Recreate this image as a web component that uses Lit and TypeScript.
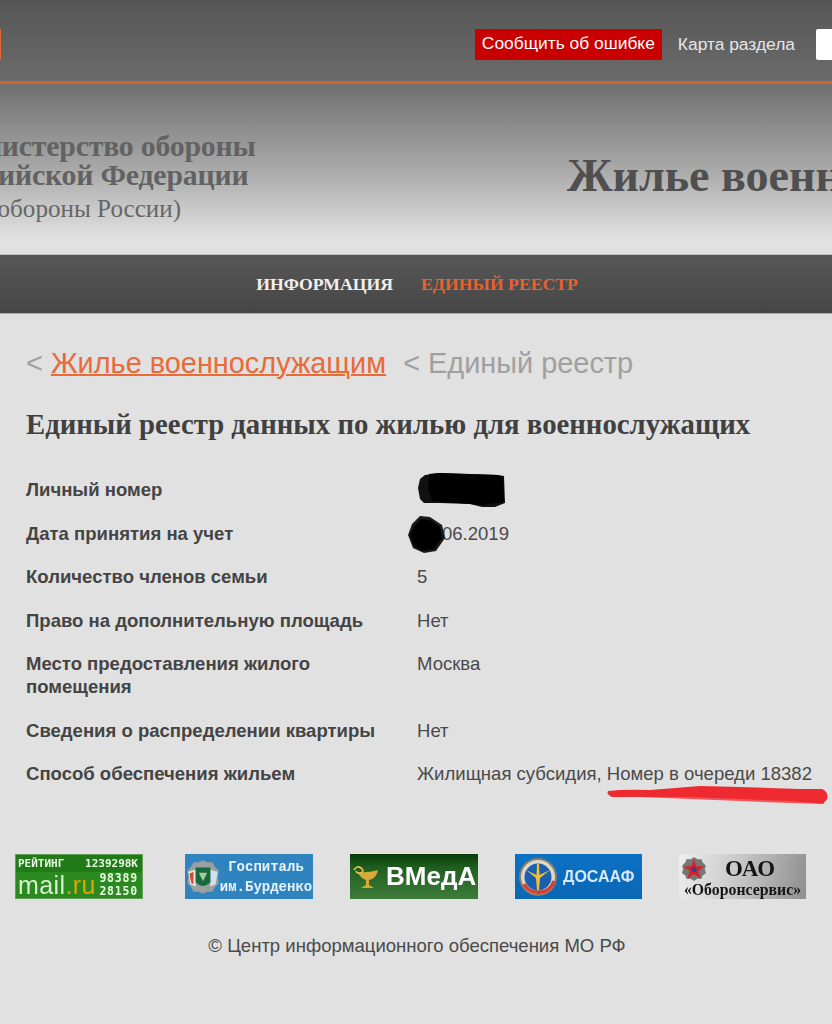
import { LitElement, html, css, svg } from "lit";
import { customElement } from "lit/decorators.js";

@customElement("app-root")
export class AppRoot extends LitElement {
  static styles = css`
    :host { display: block; position: relative; width: 832px; height: 1024px; overflow: hidden; background: #e1e1e1; font-family: "Liberation Sans", Arial, sans-serif; color: #3f3f3f; }
    .top { height: 73px; padding-top: 8px; background: linear-gradient(#565656, #6b6b6b); border-bottom: 3px solid #d2622e; display: flex; align-items: center; overflow: hidden; }
    .tick { width: 1px; height: 31px; background: #e0692e; flex: none; margin-top: -1px; }
    .top-right { margin-left: auto; display: flex; align-items: center; margin-right: -20px; }
    .report { background: #c90000; color: #fff; font-size: 17.4px; height: 31px; line-height: 29px; padding: 0 7px; white-space: nowrap; }
    .map { color: #e6e6e6; font-size: 17.4px; margin-left: 16px; white-space: nowrap; margin-top: -1px; }
    .search { width: 36px; height: 31px; background: #fff; margin-left: 21px; border-radius: 2px; }
    .banner { height: 170px; background: linear-gradient(#6f6f6f 0%, #a9a9a9 50%, #e2e2e2 92%); display: flex; overflow: hidden; font-family: "Liberation Serif", serif; border-bottom: 1px solid #bdbdbd; }
    .org { margin-left: -60px; padding-top: 47px; width: 318px; flex: none; white-space: nowrap; color: #626262; }
    .org b { display: block; font-size: 29.8px; line-height: 29px; letter-spacing: -0.2px; }
    .org span { display: block; font-size: 25.1px; line-height: 28px; margin-top: 6px; color: #666; }
    .site { margin-left: 309px; padding-top: 67px; font-size: 46px; font-weight: bold; white-space: nowrap; color: #4f4f4f; line-height: 50px; }
    .nav { height: 58px; background: linear-gradient(#575757, #464646); display: flex; justify-content: center; align-items: center; gap: 28px; font-family: "Liberation Serif", serif; font-weight: bold; font-size: 17.7px; border-bottom: 1px solid #aaa; padding-left: 2px; }
    .nav .a { color: #f0f0f0; }
    .nav .b { color: #e8622f; }
    .crumbs { margin: 33px 0 0 26px; font-size: 28.9px; line-height: 32px; color: #a0a0a0; white-space: nowrap; }
    .crumbs a { color: #ea6a38; text-decoration: underline; text-decoration-thickness: 2px; }
    .crumbs .sep2 { margin-left: 9px; }
    h1 { margin: 29px 0 0 26px; font: bold 28.75px/32px "Liberation Serif", serif; color: #404040; white-space: nowrap; }
    .rows { margin: 38px 0 0 26px; display: grid; grid-template-columns: 391px 1fr; row-gap: 20.5px; font-size: 18.55px; line-height: 23px; }
    .rows .k { font-weight: bold; color: #444; max-width: 360px; }
    .rows .v { color: #4a4a4a; white-space: nowrap; }
    .rows .v.masked { padding-left: 25px; }
    .logos { margin: 69px 0 0 15px; display: flex; gap: 37px; }
    .logo { width: 128px; height: 45px; flex: none; box-sizing: border-box; position: relative; overflow: hidden; display: flex; align-items: center; white-space: nowrap; filter: blur(0.4px); }
    .logo svg { flex: none; }
    .logo.first { margin-right: 5px; }
    .mail { background: #2a8a20; border: 1px solid #5f9f58; flex-direction: column; align-items: stretch; color: #eafbe6; font: bold 11px/12px "DejaVu Sans Mono", monospace; }
    .mail .r1 { background: #1f7a17; height: 17px; display: flex; justify-content: space-between; align-items: center; padding: 0 4px 0 2px; }
    .mail .r2 { flex: 1; display: flex; justify-content: space-between; align-items: center; padding: 0 4px 0 2px; }
    .mail .brand { font: 25px/24px "Liberation Sans", sans-serif; color: #d8efd0; letter-spacing: 0.4px; }
    .mail .brand i { color: #e0a400; font-style: normal; }
    .mail .nums { text-align: right; line-height: 13px; letter-spacing: 0.8px; font-size: 11.5px; }
    .burd { background: #2f83bf; color: #e6f3fb; font: bold 14px/20px "Liberation Mono", monospace; padding-left: 1px; }
    .burd .t { text-align: center; flex: 1; margin-left: -1px; }
    .vmed { background: linear-gradient(#063c06 0%, #1f5e1f 30%, #3f7c3b 100%); color: #fff; font: bold 26px/45px "Liberation Sans", sans-serif; padding-left: 2px; gap: 4px; }
    .dos { width: 127px; background: linear-gradient(#0c72c4, #0a66b5); color: #d6e9f8; font: bold 16px/45px "Liberation Sans", sans-serif; padding-left: 3px; gap: 5px; }
    .oao { width: 127px; background: linear-gradient(100deg, #eee 0%, #c9c9c9 45%, #8f8f8f 100%); color: #151515; font: bold 15.8px/16px "Liberation Serif", serif; flex-direction: column; align-items: stretch; }
    .oao .top-l { display: flex; align-items: center; height: 29px; padding-left: 2px; gap: 18px; font-size: 23px; letter-spacing: 0; }
    .oao .bot { text-align: center; margin-top: -1px; }
    .copy { margin-top: 35px; text-align: center; font-size: 18.55px; line-height: 24px; color: #4a4a4a; padding-left: 2px; }
    .overlay { position: absolute; left: 0; top: 0; width: 832px; height: 1024px; pointer-events: none; }
  `;

  render() {
    const rows: [string, string, boolean][] = [
      ["Личный номер", "\u00a0", false],
      ["Дата принятия на учет", "06.2019", true],
      ["Количество членов семьи", "5", false],
      ["Право на дополнительную площадь", "Нет", false],
      ["Место предоставления жилого помещения", "Москва", false],
      ["Сведения о распределении квартиры", "Нет", false],
      ["Способ обеспечения жильем", "Жилищная субсидия, Номер в очереди 18382", false],
    ];
    return html`
      <div class="top">
        <div class="tick"></div>
        <div class="top-right">
          <div class="report">Сообщить об ошибке</div>
          <div class="map">Карта раздела</div>
          <div class="search"></div>
        </div>
      </div>
      <div class="banner">
        <div class="org">
          <b>Министерство обороны</b>
          <b>Российской Федерации</b>
          <span>(Минобороны России)</span>
        </div>
        <div class="site">Жилье военнослужащим</div>
      </div>
      <div class="nav"><span class="a">ИНФОРМАЦИЯ</span><span class="b">ЕДИНЫЙ РЕЕСТР</span></div>
      <div class="crumbs">&lt; <a>Жилье военнослужащим</a> <span class="sep2">&lt;</span> Единый реестр</div>
      <h1>Единый реестр данных по жилью для военнослужащих</h1>
      <div class="rows">
        ${rows.map(([k, v, m]) => html`<div class="k">${k}</div><div class="v ${m ? "masked" : ""}">${v}</div>`)}
      </div>
      <div class="logos">
        <div class="logo first mail">
          <div class="r1"><span>РЕЙТИНГ</span><span>1239298K</span></div>
          <div class="r2"><span class="brand">mail<i>.ru</i></span><span class="nums">98389<br />28150</span></div>
        </div>
        <div class="logo burd">
          <svg width="34" height="40" viewBox="0 0 32 38">
            <path d="M16 3 L20 5 L25 5 L27 9 L31 13 L30 19 L31 25 L27 29 L25 33 L20 33 L16 35 L12 33 L7 33 L5 29 L1 25 L2 19 L1 13 L5 9 L7 5 L12 5 Z" fill="#9a9f9f" />
            <path d="M2 14 L9 12 L9 28 L4 26 Z" fill="#efe9dc" />
            <path d="M3 16 L7 14 L7 26 L5 25 Z" fill="#d24b3a" />
            <path d="M30 14 L23 12 L23 28 L28 26 Z" fill="#cfe0ee" />
            <path d="M9 10 H23 V24 Q16 31 9 24 Z" fill="#176a3c" />
            <path d="M12 15 H20 L16 23 Z" fill="#a9c8a0" />
          </svg>
          <div class="t">Госпиталь<br />им.Бурденко</div>
        </div>
        <div class="logo vmed">
          <svg width="30" height="26" viewBox="0 0 30 26">
            <path d="M6 8 Q16 9 26 6 Q24 15 17 16 L17 21 L22 24 H9 L14 21 L14 16 Q8 14 6 8 Z" fill="#d8a93a" />
            <path d="M2 6 Q5 1 9 4 Q13 7 9 9 Q5 10 4 7" fill="none" stroke="#e6c050" stroke-width="1.6" />
          </svg>
          <span>ВМедА</span>
        </div>
        <div class="logo dos">
          <svg width="40" height="40" viewBox="0 0 40 40">
            <circle cx="20" cy="20" r="19" fill="#8c7a6a" />
            <circle cx="20" cy="20" r="17" fill="#d9d9c8" />
            <path d="M6 27 A16.5 16.5 0 0 0 36 24" fill="none" stroke="#df3a2e" stroke-width="3.5" />
            <circle cx="20" cy="20" r="13.5" fill="#1c5fb0" />
            <path d="M19 7 H21 L21.5 18 L32 13 L22 21 L21 33 H19 L18 21 L8 13 L18.5 18 Z" fill="#f0c030" />
          </svg>
          <span>ДОСААФ</span>
        </div>
        <div class="logo oao">
          <div class="top-l">
            <svg width="26" height="26" viewBox="0 0 24 24">
              <path d="M12 1 L15 3 L19 3 L20 6 L23 9 L22 12 L23 16 L20 18 L19 21 L15 21 L12 23 L9 21 L5 21 L4 18 L1 16 L2 12 L1 9 L4 6 L5 3 L9 3 Z" fill="#777" />
              <path d="M12 3 L14.4 9.4 L21.5 9.6 L16 13.8 L18 21 L12 16.8 L6 21 L8 13.8 L2.5 9.6 L9.6 9.4 Z" fill="#d6222c" />
              <circle cx="12" cy="12.5" r="2.4" fill="#3a3f8c" />
            </svg>
            <span>ОАО</span>
          </div>
          <div class="bot">«Оборонсервис»</div>
        </div>
      </div>
      <div class="copy">© Центр информационного обеспечения МО РФ</div>
      <svg class="overlay" viewBox="0 0 832 1024">
        ${svg`<path d="M420 479 L425 475 L433 474 L440 473 L498 475 L504 476 L505 503 L495 507 L482 507 L470 504 L440 503 L424 503 L420 499 L418 488 Z" fill="#111" />
        <path d="M429 474 L438 473 L498 475 L503 478 L504 502 L482 505 L432 501 L428 490 Z" fill="#000" />
        <path d="M420 516 L430 517 L442 525 L445 538 L436 551 L424 553 L413 548 L408 535 L412 524 Z" fill="#1a1a1a" />
        <path d="M421 519 L430 520 L440 527 L442 538 L434 549 L423 551 L414 546 L410 535 L414 526 Z" fill="#000" />
        <path d="M640 797 L700 794 L760 794 L824 795 L824 804 L790 803 L740 801 L690 799 Z" fill="#f0555b" />
        <path d="M608 791 Q625 789 650 790 L700 786 L740 787 L800 789 L822 789 Q829 792 827 799 Q824 805 815 803 L790 801 L740 799 L690 797 L650 797 L612 797 Q606 794 608 791 Z" fill="#ee2a30" />`}
      </svg>
    `;
  }
}
